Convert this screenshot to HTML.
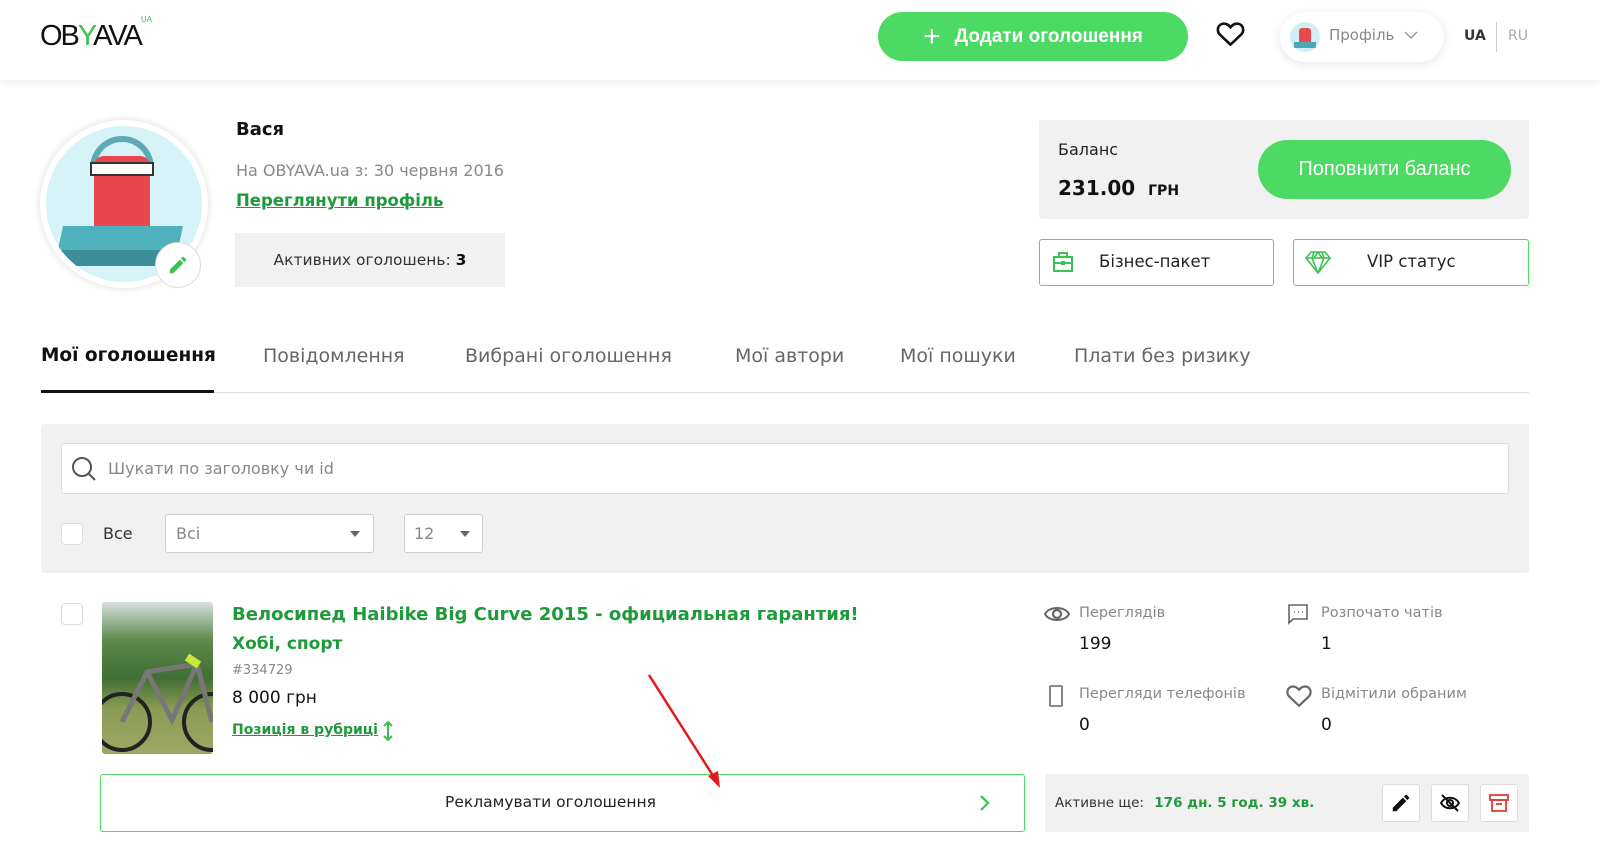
<!DOCTYPE html>
<html><head><meta charset="utf-8">
<style>
*{box-sizing:border-box;margin:0;padding:0}
body{width:1600px;height:868px;overflow:hidden;background:#fff;font-family:"DejaVu Sans","Liberation Sans",sans-serif;color:#222;position:relative}
.a{position:absolute}
.hdr{left:0;top:0;width:1600px;height:80px;background:#fff;box-shadow:0 2px 8px rgba(0,0,0,.08)}
.green{color:#1f9a3a}
.btn{background:#4cd964;color:#fff;border-radius:26px;text-align:center}
.gray{background:#f1f1f1}
.ob{border:1px solid #4cd964;border-radius:3px;background:#fff}
.tab{top:345px;font-size:19px;color:#666;white-space:nowrap}
.lbl{font-size:14.5px;color:#888}
.num{font-size:17px;color:#111}
.ib{width:38px;height:38px;background:#fff;border:1px solid #ddd;border-radius:3px}
</style></head><body>
<div class="a hdr"></div>
<div class="a" style="left:40px;top:20px;font-family:'Liberation Sans',sans-serif;font-size:29px;letter-spacing:-2px;color:#111;font-weight:300">OB<span style="color:#3cc251">Y</span>AVA<sup style="font-size:8px;color:#3cc251;letter-spacing:0;position:relative;top:-12px">UA</sup></div>
<div class="a btn" style="left:878px;top:12px;width:310px;height:49px;font-size:19px;line-height:49px;font-family:'Liberation Sans',sans-serif;font-weight:bold"><span style="font-size:30px;font-weight:300;vertical-align:-4px;margin-right:14px">+</span>Додати оголошення</div>
<svg class="a" style="left:1216px;top:21px" width="29" height="26" viewBox="0 0 24 22"><path d="M12 20 3 11.5C.5 9 .8 4.8 3.7 3 6.3 1.4 9.8 2.4 12 5.2 14.2 2.4 17.7 1.4 20.3 3 23.2 4.8 23.5 9 21 11.5Z" fill="none" stroke="#111" stroke-width="2.2"/></svg>
<div class="a" style="left:1280px;top:12px;width:164px;height:50px;border-radius:25px;background:#fff;box-shadow:0 2px 10px rgba(0,0,0,.1)"></div>
<div class="a" style="left:1290px;top:22px;width:30px;height:30px;border-radius:50%;background:#cfeff5;overflow:hidden"><div class="a" style="left:9px;top:6px;width:12px;height:16px;background:#e74a4a;border-radius:3px"></div><div class="a" style="left:4px;top:20px;width:22px;height:6px;background:#4aa7b3"></div></div>
<div class="a" style="left:1329px;top:26px;font-size:15px;color:#888">Профіль</div>
<svg class="a" style="left:1404px;top:30px" width="14" height="10"><path d="M1 2 7 8 13 2" fill="none" stroke="#999" stroke-width="1.5"/></svg>
<div class="a" style="left:1464px;top:28px;font-size:14px;font-weight:bold;color:#333">UA</div>
<div class="a" style="left:1496px;top:22px;width:1px;height:30px;background:#ccc"></div>
<div class="a" style="left:1508px;top:28px;font-size:14px;color:#aaa">RU</div>

<div class="a" style="left:40px;top:120px;width:168px;height:168px;border-radius:50%;background:#fff;box-shadow:0 0 8px rgba(0,0,0,.15)"></div>
<div class="a" style="left:46px;top:126px;width:156px;height:156px;border-radius:50%;background:#d6f3f8;overflow:hidden">
 <div class="a" style="left:44px;top:10px;width:64px;height:40px;border:6px solid #5fa9b3;border-bottom:none;border-radius:32px 32px 0 0"></div>
 <div class="a" style="left:48px;top:30px;width:56px;height:80px;background:#e8484d;border-radius:10px"></div>
 <div class="a" style="left:44px;top:36px;width:64px;height:14px;background:#fff;border:2px solid #333"></div>
 <div class="a" style="left:14px;top:100px;width:120px;height:28px;background:#4fb1bd;transform:skewX(-12deg)"></div>
 <div class="a" style="left:10px;top:124px;width:130px;height:16px;background:#3a8f99"></div>
</div>
<div class="a" style="left:155px;top:242px;width:46px;height:46px;border-radius:50%;background:#fff;border:1px solid #ddd"></div>
<svg class="a" style="left:167px;top:254px" width="22" height="22" viewBox="0 0 24 24"><path d="M3 17.2V21h3.8L17.8 10 14 6.2ZM20.7 7c.4-.4.4-1 0-1.4l-2.3-2.3c-.4-.4-1-.4-1.4 0l-1.8 1.8 3.7 3.7Z" fill="#3cc251"/></svg>

<div class="a" style="left:236px;top:119px;font-size:18px;font-weight:bold;color:#111">Вася</div>
<div class="a" style="left:236px;top:161px;font-size:16px;color:#888">На OBYAVA.ua з: 30 червня 2016</div>
<div class="a green" style="left:236px;top:191px;font-size:16.5px;font-weight:bold;text-decoration:underline">Переглянути профіль</div>
<div class="a gray" style="left:235px;top:233px;width:270px;height:54px;text-align:center;line-height:54px;font-size:15.5px;color:#333">Активних оголошень: <b style="color:#111">3</b></div>

<div class="a gray" style="left:1039px;top:120px;width:490px;height:99px;border-radius:3px"></div>
<div class="a" style="left:1058px;top:140px;font-size:16px;color:#222">Баланс</div>
<div class="a" style="left:1058px;top:176px;font-size:20px;font-weight:bold;color:#111">231.00 <span style="font-size:14px;margin-left:6px">ГРН</span></div>
<div class="a btn" style="left:1258px;top:140px;width:253px;height:59px;border-radius:30px;line-height:59px;font-size:20px;font-family:'Liberation Sans',sans-serif">Поповнити баланс</div>
<div class="a ob" style="left:1039px;top:239px;width:235px;height:47px"></div>
<svg class="a" style="left:1052px;top:251px" width="22" height="22" viewBox="0 0 22 22"><rect x="2" y="6" width="18" height="14" fill="none" stroke="#3cc251" stroke-width="2"/><path d="M7 6V2h8v4M2 12h18" stroke="#3cc251" stroke-width="2" fill="none"/><rect x="9" y="10" width="4" height="4" fill="#3cc251"/></svg>
<div class="a" style="left:1099px;top:252px;font-size:16.5px;color:#222">Бізнес-пакет</div>
<div class="a ob" style="left:1293px;top:239px;width:236px;height:47px"></div>
<svg class="a" style="left:1305px;top:250px" width="26" height="24" viewBox="0 0 26 24"><path d="M6 2h14l5 6-12 15L1 8Z M1 8h24 M9 2 7 8l6 15 6-15-2-6 M13 2 9 8M13 2l4 6" fill="none" stroke="#3cc251" stroke-width="1.6"/></svg>
<div class="a" style="left:1367px;top:252px;font-size:16.5px;color:#222">VIP статус</div>

<div class="a tab" style="left:41px;color:#111;font-weight:bold;font-size:18.5px">Мої оголошення</div>
<div class="a tab" style="left:263px">Повідомлення</div>
<div class="a tab" style="left:465px">Вибрані оголошення</div>
<div class="a tab" style="left:735px">Мої автори</div>
<div class="a tab" style="left:900px">Мої пошуки</div>
<div class="a tab" style="left:1074px">Плати без ризику</div>
<div class="a" style="left:41px;top:392px;width:1488px;height:1px;background:#ddd"></div>
<div class="a" style="left:41px;top:390px;width:173px;height:3px;background:#111"></div>

<div class="a gray" style="left:41px;top:424px;width:1488px;height:149px;border-radius:3px"></div>
<div class="a" style="left:61px;top:443px;width:1448px;height:51px;background:#fff;border:1px solid #ddd;border-radius:3px"></div>
<svg class="a" style="left:71px;top:456px" width="26" height="26" viewBox="0 0 26 26"><circle cx="11" cy="11" r="9" fill="none" stroke="#555" stroke-width="2"/><path d="M18 18l6 6" stroke="#555" stroke-width="2"/></svg>
<div class="a" style="left:108px;top:459px;font-size:16px;color:#888">Шукати по заголовку чи id</div>
<div class="a" style="left:61px;top:523px;width:22px;height:22px;background:#fff;border:1px solid #ddd;border-radius:4px"></div>
<div class="a" style="left:103px;top:524px;font-size:16px;color:#333">Все</div>
<div class="a" style="left:165px;top:514px;width:209px;height:39px;background:#fff;border:1px solid #ccc;border-radius:3px"></div>
<div class="a" style="left:176px;top:524px;font-size:16px;color:#888">Всі</div>
<div class="a" style="left:350px;top:531px;border:5px solid transparent;border-top:6px solid #666"></div>
<div class="a" style="left:404px;top:514px;width:79px;height:39px;background:#fff;border:1px solid #ccc;border-radius:3px"></div>
<div class="a" style="left:414px;top:524px;font-size:16px;color:#888">12</div>
<div class="a" style="left:460px;top:531px;border:5px solid transparent;border-top:6px solid #666"></div>

<div class="a" style="left:61px;top:603px;width:22px;height:22px;background:#fff;border:1px solid #ddd;border-radius:4px"></div>
<div class="a" style="left:102px;top:602px;width:111px;height:152px;border-radius:3px;overflow:hidden;background:linear-gradient(#d7dfe0 0,#5e8a4a 25%,#3f6f32 50%,#8a9b55 70%,#9fa866 100%)">
 <svg width="111" height="152"><circle cx="20" cy="120" r="28" fill="none" stroke="#222" stroke-width="4"/><circle cx="110" cy="120" r="28" fill="none" stroke="#222" stroke-width="4"/><path d="M20 120 45 70 95 62 110 120M45 70 70 118 95 62" stroke="#777" stroke-width="5" fill="none"/><path d="M85 55l12 8" stroke="#c7e83a" stroke-width="8"/></svg>
</div>
<div class="a green" style="left:232px;top:604px;font-size:18px;font-weight:bold;white-space:nowrap">Велосипед Haibike Big Curve 2015 - официальная гарантия!</div>
<div class="a green" style="left:232px;top:634px;font-size:17px;font-weight:bold">Хобі, спорт</div>
<div class="a" style="left:232px;top:663px;font-size:13px;color:#888">#334729</div>
<div class="a" style="left:232px;top:688px;font-size:17px;color:#111">8 000 грн</div>
<div class="a green" style="left:232px;top:722px;font-size:14px;font-weight:bold;text-decoration:underline">Позиція в рубриці</div>
<svg class="a" style="left:382px;top:721px" width="12" height="20"><path d="M6 1v18M2 5l4-4 4 4M2 15l4 4 4-4" stroke="#3cc251" stroke-width="2" fill="none"/></svg>

<svg class="a" style="left:1044px;top:603px" width="26" height="22" viewBox="0 0 26 22"><path d="M1 11C5 3 21 3 25 11 21 19 5 19 1 11Z" fill="none" stroke="#666" stroke-width="2"/><circle cx="13" cy="11" r="4" fill="none" stroke="#666" stroke-width="2.2"/></svg>
<div class="a lbl" style="left:1079px;top:605px">Переглядів</div>
<div class="a num" style="left:1079px;top:634px">199</div>
<svg class="a" style="left:1287px;top:603px" width="22" height="22"><path d="M2 2h18v14H6l-4 4Z" fill="none" stroke="#666" stroke-width="1.6"/><path d="M7 9h1M11 9h1M15 9h1" stroke="#666" stroke-width="1.6"/></svg>
<div class="a lbl" style="left:1321px;top:605px">Розпочато чатів</div>
<div class="a num" style="left:1321px;top:634px">1</div>
<svg class="a" style="left:1047px;top:684px" width="18" height="24"><rect x="3" y="2" width="12" height="20" rx="1" fill="none" stroke="#666" stroke-width="1.6"/></svg>
<div class="a lbl" style="left:1079px;top:686px">Перегляди телефонів</div>
<div class="a num" style="left:1079px;top:715px">0</div>
<svg class="a" style="left:1286px;top:684px" width="26" height="24" viewBox="0 0 24 22"><path d="M12 20 3 11.5C.5 9 .8 4.8 3.7 3 6.3 1.4 9.8 2.4 12 5.2 14.2 2.4 17.7 1.4 20.3 3 23.2 4.8 23.5 9 21 11.5Z" fill="none" stroke="#666" stroke-width="2"/></svg>
<div class="a lbl" style="left:1321px;top:686px">Відмітили обраним</div>
<div class="a num" style="left:1321px;top:715px">0</div>

<div class="a ob" style="left:100px;top:774px;width:925px;height:58px"></div>
<div class="a" style="left:445px;top:793px;font-size:15.5px;color:#222">Рекламувати оголошення</div>
<svg class="a" style="left:978px;top:794px" width="14" height="18"><path d="M3 2l7 7-7 7" stroke="#3cc251" stroke-width="2.2" fill="none"/></svg>
<svg class="a" style="left:640px;top:670px" width="90" height="125"><path d="M9 5 77 112" stroke="#e81818" stroke-width="2.5"/><path d="M80 118 68 106 78 101Z" fill="#e81818"/></svg>

<div class="a gray" style="left:1045px;top:774px;width:484px;height:58px;border-radius:3px"></div>
<div class="a" style="left:1055px;top:795px;font-size:13.5px;color:#333">Активне ще: <b class="green" style="margin-left:6px">176 дн. 5 год. 39 хв.</b></div>
<div class="a ib" style="left:1382px;top:784px"></div>
<svg class="a" style="left:1390px;top:792px" width="22" height="22" viewBox="0 0 24 24"><path d="M3 17.2V21h3.8L17.8 10 14 6.2ZM20.7 7c.4-.4.4-1 0-1.4l-2.3-2.3c-.4-.4-1-.4-1.4 0l-1.8 1.8 3.7 3.7Z" fill="#111"/></svg>
<div class="a ib" style="left:1431px;top:784px"></div>
<svg class="a" style="left:1439px;top:792px" width="22" height="22"><path d="M2 11C6 4 16 4 20 11 16 18 6 18 2 11Z" fill="none" stroke="#111" stroke-width="2"/><circle cx="11" cy="11" r="3" fill="none" stroke="#111" stroke-width="2"/><path d="M3 3l16 16" stroke="#111" stroke-width="2"/></svg>
<div class="a ib" style="left:1480px;top:784px"></div>
<svg class="a" style="left:1489px;top:793px" width="20" height="20"><rect x="1" y="2" width="18" height="5" fill="none" stroke="#e53935" stroke-width="1.8"/><rect x="3" y="7" width="14" height="11" fill="none" stroke="#e53935" stroke-width="1.8"/><path d="M7 11h6" stroke="#e53935" stroke-width="1.8"/></svg>
</body></html>
